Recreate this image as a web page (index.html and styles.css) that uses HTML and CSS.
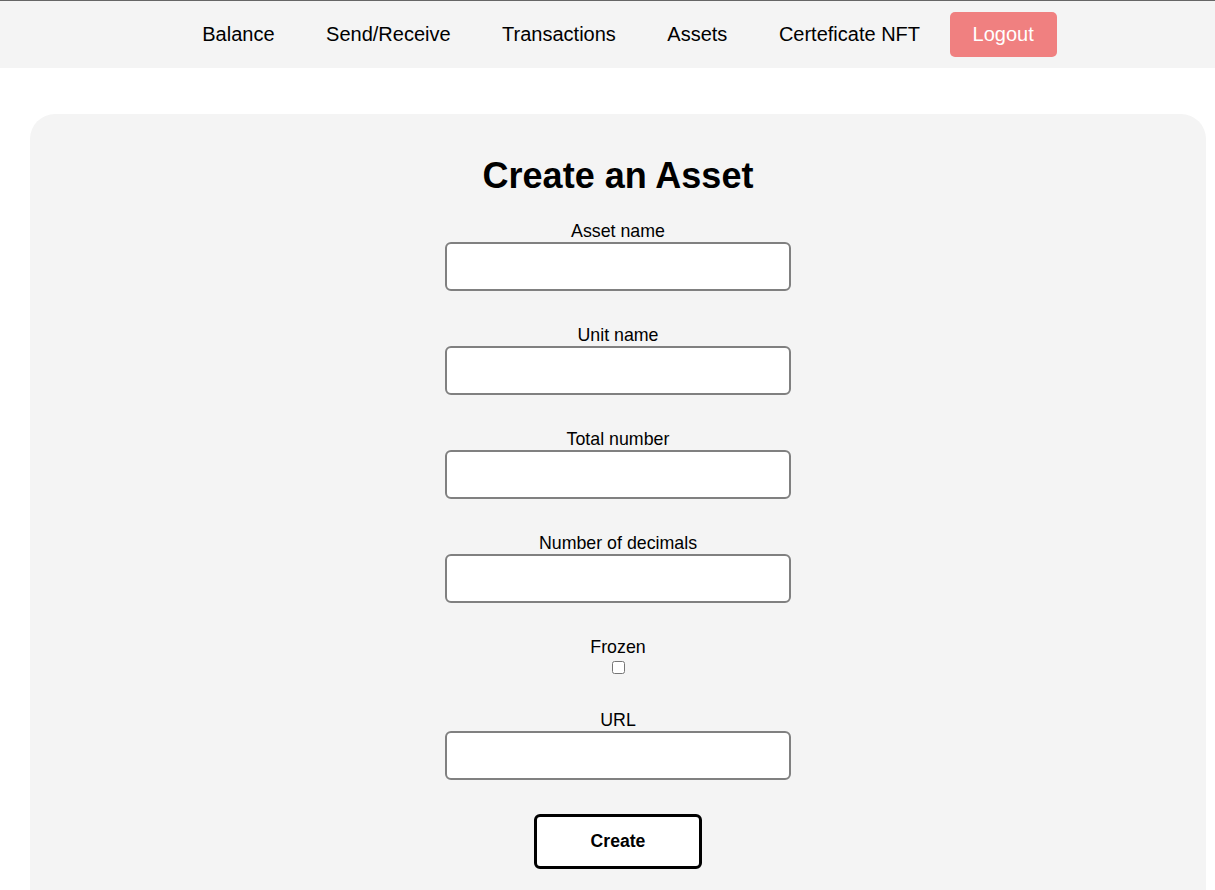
FILE: index.html
```html
<!DOCTYPE html>
<html lang="en">
<head>
<meta charset="utf-8">
<title>Create an Asset</title>
<link rel="stylesheet" href="styles.css">
</head>
<body>
<nav class="topnav">
  <a class="nav-link" href="#">Balance</a>
  <a class="nav-link" href="#">Send/Receive</a>
  <a class="nav-link" href="#">Transactions</a>
  <a class="nav-link" href="#">Assets</a>
  <a class="nav-link" href="#">Certeficate NFT</a>
  <button class="logout-btn" type="button">Logout</button>
</nav>
<main class="card">
  <h1 class="card-title">Create an Asset</h1>
  <form class="asset-form">
    <div class="field">
      <label class="field-label" for="asset-name">Asset name</label>
      <input class="text-input" id="asset-name" type="text">
    </div>
    <div class="field">
      <label class="field-label" for="unit-name">Unit name</label>
      <input class="text-input" id="unit-name" type="text">
    </div>
    <div class="field">
      <label class="field-label" for="total">Total number</label>
      <input class="text-input" id="total" type="text">
    </div>
    <div class="field">
      <label class="field-label" for="decimals">Number of decimals</label>
      <input class="text-input" id="decimals" type="text">
    </div>
    <div class="field field-check">
      <label class="field-label" for="frozen">Frozen</label>
      <input class="check-input" id="frozen" type="checkbox">
    </div>
    <div class="field">
      <label class="field-label" for="url">URL</label>
      <input class="text-input" id="url" type="text">
    </div>
    <button class="create-btn" type="button">Create</button>
  </form>
</main>
</body>
</html>
```
FILE: styles.css
```css
html, body {
  margin: 0;
  padding: 0;
  background: #ffffff;
}

body {
  font-family: "Liberation Sans", Arial, sans-serif;
  color: #000000;
}

.topnav {
  display: flex;
  justify-content: center;
  align-items: center;
  gap: 7.5px;
  background: #f4f4f4;
  border-top: 1px solid #666666;
  padding: 11px 0 11px 22px;
}

.nav-link {
  font-size: 20px;
  color: #000000;
  text-decoration: none;
  padding: 0 22px;
  line-height: 45px;
}

.logout-btn {
  font-family: "Liberation Sans", Arial, sans-serif;
  font-size: 20px;
  color: #ffffff;
  background: #f08080;
  border: none;
  border-radius: 5px;
  height: 45px;
  padding: 0 23px;
  margin: 0;
}

.card {
  margin: 46px 0 0 30px;
  width: 1176px;
  min-height: 800px;
  background: #f4f4f4;
  border-radius: 25px 25px 0 0;
  padding-top: 17px;
}

.card-title {
  font-size: 36px;
  font-weight: bold;
  text-align: center;
  margin: 24px 0 24px 0;
}

.asset-form {
  display: flex;
  flex-direction: column;
  align-items: center;
}

.field {
  display: flex;
  flex-direction: column;
  align-items: center;
  margin-bottom: 34px;
}

.field-check {
  margin-bottom: 33px;
}

.field-label {
  font-size: 17.8px;
  line-height: 21px;
}

.text-input {
  box-sizing: border-box;
  width: 346px;
  height: 49px;
  border: 2px solid #808080;
  border-radius: 6px;
  background: #ffffff;
  margin: 0;
  padding: 0 10px;
  font-size: 16px;
}

.check-input {
  width: 13px;
  height: 13px;
  margin: 3px;
}

.create-btn {
  box-sizing: border-box;
  width: 168px;
  height: 55px;
  background: #ffffff;
  border: 3px solid #000000;
  border-radius: 6px;
  font-family: "Liberation Sans", Arial, sans-serif;
  font-size: 17.6px;
  font-weight: bold;
  color: #000000;
  margin: 0;
}
```
